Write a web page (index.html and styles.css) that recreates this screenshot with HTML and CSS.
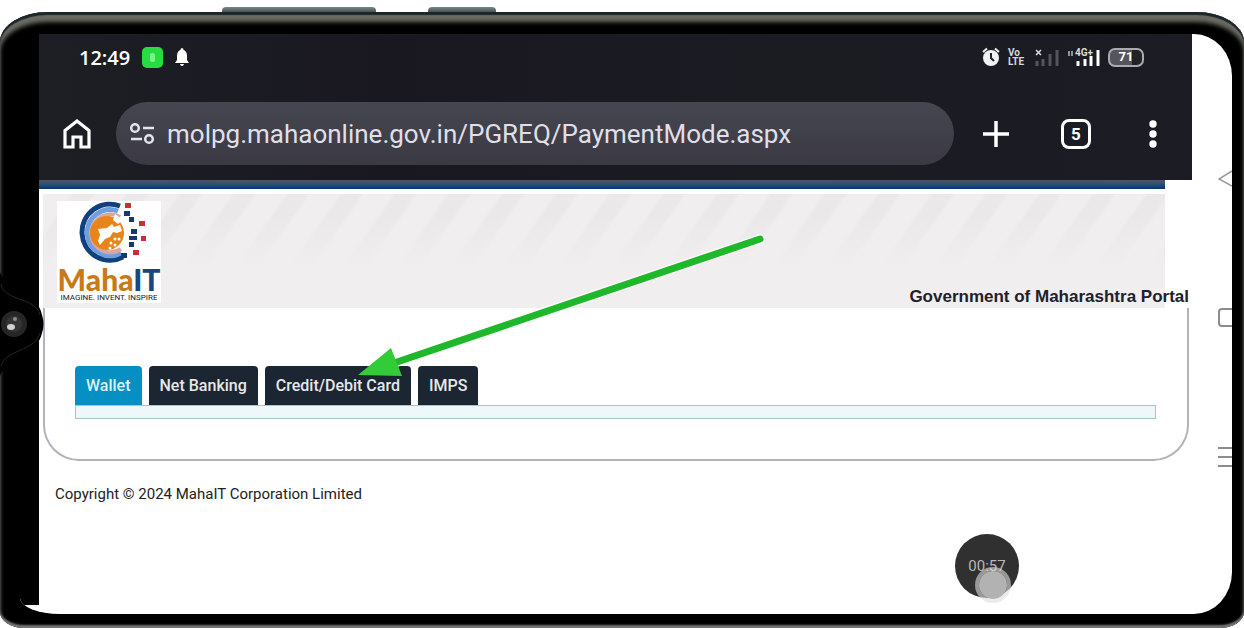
FILE: index.html
```
<!DOCTYPE html>
<html lang="en">
<head>
<meta charset="utf-8">
<title>MahaIT Payment Mode</title>
<link rel="stylesheet" href="styles.css">
</head>
<body>
<div class="scene">
  <span class="side-key key-volume"></span>
  <span class="side-key key-power"></span>
  <div class="phone">
    <div class="screen">
      <div class="cutout">
        <svg class="camera" width="46" height="104" viewBox="0 0 46 104" aria-hidden="true">
          <path d="M0 0C6 22 38 19 42 43Q45 52 42 61C38 83 6 82 0 104Z" fill="#000"/>
          <path d="M1 12C4 30 35 24 40 43M40 61C34 80 6 77 1 94" fill="none" stroke="#262626"/>
          <circle cx="14" cy="52" r="13" fill="#262626"/>
          <circle cx="14" cy="52" r="8" fill="#343434"/>
          <ellipse cx="11" cy="55" rx="4" ry="3" fill="#d0d0d0"/>
          <circle cx="15" cy="47" r="2" fill="#8a8a8a"/>
        </svg>
      </div>
      <div class="display">
        <header class="browser">
          <div class="status">
            <div class="status-group">
              <span class="clock">12:49</span>
              <span class="app-badge"><i></i></span>
              <svg width="14" height="18" viewBox="0 0 14 18" fill="#fff" aria-hidden="true"><path d="M7 0C8 0 8.500 1 8.500 2Q12 3 12 8V12L14 15H0L2 12V8Q2 3 5.500 2C5.500 1 6 0 7 0ZM5 16H9Q8.500 18 7 18T5 16Z"/></svg>
            </div>
            <div class="status-group status-right">
              <svg width="18" height="20" viewBox="0 0 18 20" aria-hidden="true"><path d="M1 5L5 1.500M17 5L13 1.500" stroke="#eee" stroke-width="2"/><circle cx="9" cy="11" r="8" fill="#f2f2f4"/><path d="M9 6V11L12 14" fill="none" stroke="#24242a" stroke-width="2"/></svg>
              <span class="volte"><span>Vo</span><span>LTE</span></span>
              <svg width="25" height="19" viewBox="0 0 25 19" aria-hidden="true"><path d="M1 2L6 7M6 2L1 7" stroke="#ddd" stroke-width="1.500"/><path d="M2 18V13M8 18V11M15 18V6M22 18V2" stroke="#54555c" stroke-width="3"/></svg>
              <span class="network">
                <span class="network-label">4G+</span>
                <svg width="32" height="19" viewBox="0 0 32 19" aria-hidden="true"><path d="M1 3V8M4 3V8" stroke="#bbb" stroke-width="1.500"/><path d="M10 18V13M17 18V11M23 18V8M30 18V2" stroke="#fff" stroke-width="3"/></svg>
              </span>
              <span class="battery"><span>71</span></span>
            </div>
          </div>
          <div class="toolbar">
            <button class="icon-button" type="button" aria-label="Home">
              <svg width="28" height="30" viewBox="0 0 28 30"><path d="M2 11.500L14 2L26 11.500V28H18V18H10V28H2Z" fill="none" stroke="#fff" stroke-width="3.200"/></svg>
            </button>
            <div class="address">
              <svg width="26" height="22" viewBox="0 0 26 22" fill="none" stroke="#e4e4ec" stroke-width="2.500" aria-hidden="true"><circle cx="6" cy="5" r="3.800"/><path d="M14 5H25M2 16H13"/><circle cx="20" cy="16" r="3.800"/></svg>
              <input type="text" aria-label="Address" value="molpg.mahaonline.gov.in/PGREQ/PaymentMode.aspx">
            </div>
            <div class="actions">
              <button class="icon-button" type="button" aria-label="New tab">
                <svg width="28" height="28" viewBox="0 0 28 28"><path d="M14 1V27M1 14H27" stroke="#fff" stroke-width="3.500"/></svg>
              </button>
              <button class="tab-count" type="button" aria-label="5 open tabs">5</button>
              <button class="icon-button menu-button" type="button" aria-label="Menu">
                <svg width="10" height="28" viewBox="0 0 10 28" fill="#fff"><circle cx="5" cy="4" r="3.700"/><circle cx="5" cy="14" r="3.700"/><circle cx="5" cy="24" r="3.700"/></svg>
              </button>
            </div>
          </div>
        </header>
        <main class="page">
          <div class="rule"></div>
          <div class="banner">
            <div class="logo">
              <svg width="76" height="64" viewBox="0 0 76 64" aria-hidden="true">
                <path d="M45 5A28 28 0 1 0 48 56" fill="none" stroke="#123f7e" stroke-width="5"/>
                <path d="M43 10A23 23 0 1 0 46 52" fill="none" stroke="#6f9fe0" stroke-width="5"/>
                <path d="M45 16A19 19 0 1 0 46 48" fill="none" stroke="#d9a6a4" stroke-width="4"/>
                <circle cx="32" cy="32" r="17" fill="#e8851a"/>
                <path d="M23 28L32 27L37 23L39 26L45 24L47 30L42 32L38 31L35 36L30 38L25 44L23 40L25 34Z" fill="#fff"/>
                <path d="M40 13L48 19L43 23L38 19Z" fill="#fff"/>
                <g fill="#fff"><circle cx="36" cy="42" r="1.500"/><circle cx="40" cy="38" r="1.500"/><circle cx="40" cy="44" r="1.500"/><circle cx="44" cy="38" r="1.500"/><circle cx="35" cy="47" r="1.500"/></g>
                <g fill="#163a70"><rect x="49" y="10" width="6" height="5"/><rect x="54" y="16" width="5" height="5"/><rect x="56" y="28" width="6" height="5"/><rect x="54" y="35" width="8" height="4"/><rect x="54" y="41" width="5" height="5"/><rect x="46" y="52" width="6" height="5"/></g>
                <g fill="#c92f38"><rect x="50" y="2" width="6" height="5"/><rect x="64" y="20" width="6" height="5"/><rect x="66" y="35" width="5" height="5"/><rect x="58" y="49" width="6" height="5"/></g>
              </svg>
              <div class="brand">Maha<span>IT</span></div>
              <div class="tagline">IMAGINE. INVENT. INSPIRE</div>
            </div>
            <h1>Government of Maharashtra Portal</h1>
          </div>
          <section class="panel">
            <div class="tabs">
              <button class="tab active" type="button">Wallet</button>
              <button class="tab" type="button">Net Banking</button>
              <button class="tab" type="button">Credit/Debit Card</button>
              <button class="tab" type="button">IMPS</button>
            </div>
            <div class="tab-body"></div>
          </section>
          <footer>Copyright © 2024 MahaIT Corporation Limited</footer>
        </main>
      </div>
      <nav class="system-nav" aria-label="System navigation">
        <button type="button" aria-label="Back"><svg width="14" height="20" viewBox="0 0 14 20"><path d="M14 2L1 10L14 17" fill="none" stroke="#999" stroke-width="1.500"/></svg></button>
        <button type="button" aria-label="Home screen"><svg width="14" height="20" viewBox="0 0 14 20"><path d="M14 1H4Q1 1 1 4V15Q1 18 4 18H14" fill="none" stroke="#8c8c8c" stroke-width="2"/></svg></button>
        <button type="button" aria-label="Recent apps"><svg width="14" height="20" viewBox="0 0 14 20"><path d="M0 1H14M0 10H14M0 19H14" stroke="#8c8c8c" stroke-width="2"/></svg></button>
      </nav>
    </div>
  </div>
  <svg class="arrow" width="412" height="144" viewBox="0 0 412 144" aria-hidden="true">
    <path d="M405 5L42 128" stroke="#fff" stroke-opacity=".7" stroke-width="10" stroke-linecap="round"/>
    <path d="M405 5L42 128" stroke="#1fb82a" stroke-width="7" stroke-linecap="round"/>
    <path d="M3 141L36 114L47 142Z" fill="#32cc36"/>
  </svg>
  <div class="recorder"><span>00:57</span><i></i></div>
</div>
</body>
</html>
```
FILE: styles.css
```
* { box-sizing: border-box; }
body { margin: 0; background: #fff; font-family: Roboto, "Liberation Sans", sans-serif; color: #222; }
button { border: 0; padding: 0; background: none; font: inherit; color: inherit; }
svg { display: block; flex: none; }

.scene { position: relative; display: flex; height: 100vh; padding-top: 12px; overflow: hidden; }
.side-key { position: absolute; top: 7px; height: 8px; border-radius: 4px 4px 0 0; background: linear-gradient(#7d8788, #26343a); }
.key-volume { left: 222px; width: 154px; }
.key-power { left: 428px; width: 68px; }

.phone {
  position: relative; flex: 1; display: flex; padding: 22px 12px 14px 20px;
  border-radius: 48px 48px 24px 24px / 30px 30px 16px 16px;
  background: #000;
  box-shadow: inset 0 3px 1px #1c262a, inset 0 10px 4px #6a6b63, inset 0 -3px 2px #777;
}
.screen { flex: 1; display: flex; min-width: 0; overflow: hidden; background: #fff; border-radius: 0 38px 38px 40px / 0 42px 42px 16px; }
.cutout { width: 19px; margin-bottom: 9px; background: #000; }
.camera { position: absolute; left: 0; top: 260px; z-index: 2; }
.display { flex: 1; min-width: 0; }

.browser { padding: 8px 30px 15px 24px; background: linear-gradient(90deg, #1d1f24, #191821 30%, #1b1c22 70%, #1b1c24); color: #fff; }
.status { display: flex; justify-content: space-between; align-items: center; height: 32px; padding: 0 18px 2px 16px; }
.status-group { display: flex; align-items: center; gap: 12px; }
.status-right { gap: 8px; }
.clock { font: 600 20px "Open Sans", sans-serif; }
.app-badge { display: grid; place-items: center; width: 21px; height: 21px; border-radius: 5px; background: #27dc42; }
.app-badge i { width: 5px; height: 9px; border-radius: 2px; background: #7cf088; }
.volte { display: flex; flex-direction: column; width: 19px; font-size: 10px; line-height: 9px; font-weight: 700; color: #d8d8dc; }
.network { position: relative; }
.network-label { position: absolute; left: 7px; top: 0; font-size: 10px; line-height: 10px; font-weight: 700; color: #ddd; }
.battery { display: grid; place-items: center; width: 36px; height: 19px; border: 2px solid #aaaab0; border-radius: 7px; background: linear-gradient(90deg, #55555b 70%, #222 70%); font-size: 13px; line-height: 14px; font-weight: 700; }

.toolbar { display: flex; align-items: center; margin-top: 28px; }
.address { flex: 1; display: flex; align-items: center; gap: 12px; height: 63px; margin: 0 28px 0 25px; padding: 0 24px 0 13px; border-radius: 32px; background: linear-gradient(#45464f, #3b3a44); }
.address input { flex: 1; min-width: 0; padding: 0; border: 0; outline: 0; background: none; color: #e0dfe9; font: 26px Roboto, sans-serif; }
.actions { display: flex; align-items: center; gap: 51px; width: 180px; }
.menu-button { margin-left: 6px; }
.tab-count { width: 30px; height: 30px; border: 3px solid #fff; border-radius: 8px; font-size: 17px; line-height: 20px; font-weight: 700; }

.rule { height: 9px; margin-right: 27px; background: linear-gradient(#4c5564 0, #405168 3px, #204b7e 5px, #0b3467 9px); }
.banner {
  display: flex; align-items: flex-end; justify-content: space-between; height: 114px; margin-top: 5px; padding: 0 3px 0 18px;
  background:
    linear-gradient(#f0eeef00 20%, #f0eeef 65%) 4px 0 / calc(100% - 31px) 100% no-repeat,
    repeating-linear-gradient(125deg, #f0eeef 0 22px, #eae8e9 26px 40px, #f0eeef 44px) 4px 0 / calc(100% - 31px) 100% no-repeat;
}
.logo { width: 104px; margin-bottom: 5px; background: #fff; }
.logo svg { margin: 0 0 0 18px; }
.brand { font: 900 30px/28px Lato, sans-serif; color: #c97a18; text-align: center; }
.brand span { color: #154880; }
.tagline { font-size: 8px; line-height: 10px; color: #222; text-align: center; white-space: nowrap; }
.banner h1 { margin: 0; font: 700 17px/22px "Liberation Sans", sans-serif; color: #20202a; }

.panel { margin: 0 3px 0 4px; padding: 58px 31px 40px 30px; border: solid #b3b2bd; border-width: 0 2px 2px; border-radius: 0 0 36px 36px; }
.tabs { display: flex; gap: 7px; }
.tab { height: 39px; padding: 0 11px; border-radius: 4px 4px 0 0; background: #1c2632; color: #e6e8ea; font-size: 16px; font-weight: 500; }
.tab.active { background: #058fc2; color: #d8f3fc; }
.tab-body { height: 14px; border: 1px solid #a9c5c7; background: #eef8fa; }
footer { padding: 22px 16px; font-size: 15px; line-height: 22px; }

.system-nav { width: 40px; display: flex; flex-direction: column; align-items: flex-end; gap: 119px; padding-top: 135px; }

.arrow { position: absolute; left: 355px; top: 234px; fill: none; z-index: 3; }
.recorder { position: absolute; left: 955px; top: 534px; display: grid; place-items: center; width: 64px; height: 64px; border-radius: 50%; background: #303031; color: #b8b8b8; font-size: 15px; }
.recorder i { position: absolute; left: 20px; top: 33px; width: 36px; height: 36px; border: 4px solid #dddddd99; border-radius: 50%; background: #b2b2b2; background-clip: padding-box; }
```
